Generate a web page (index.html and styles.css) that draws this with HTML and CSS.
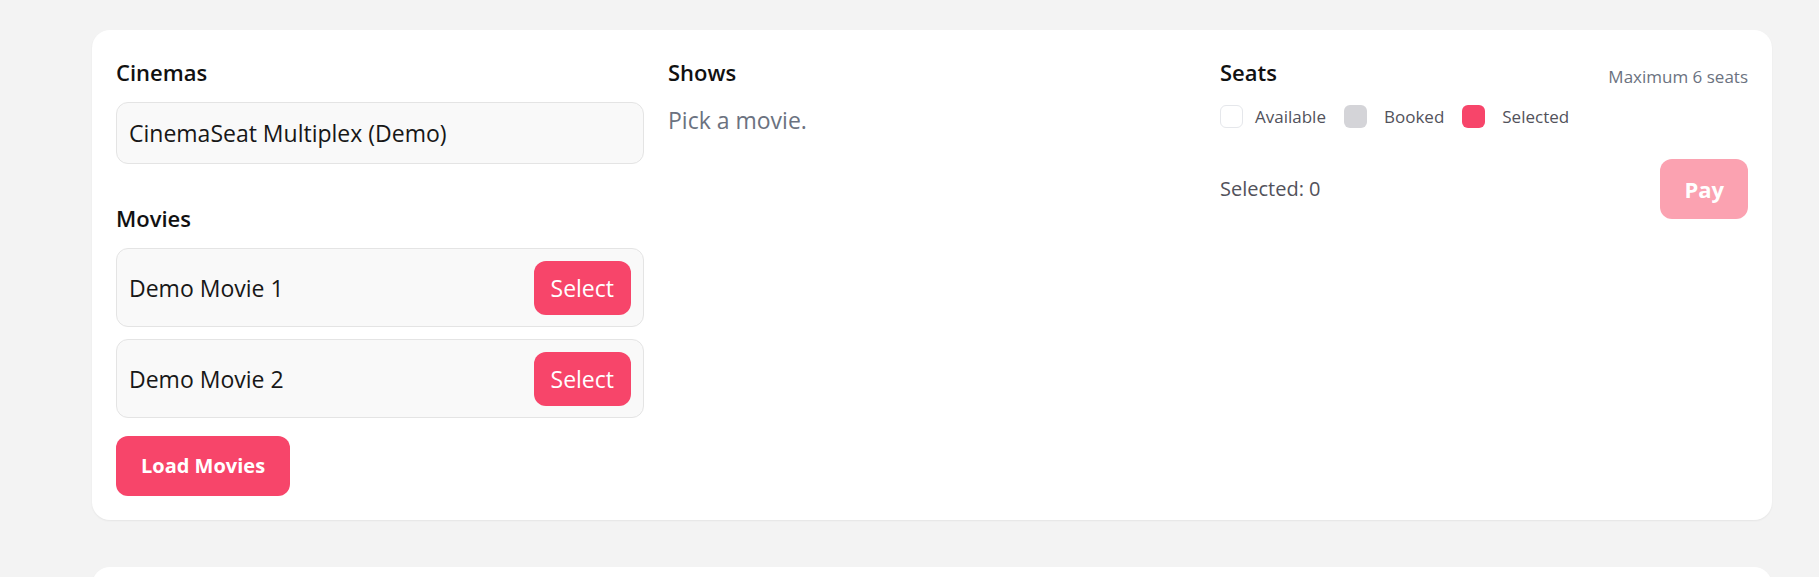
FILE: index.html
```html
<!DOCTYPE html>
<html lang="en">
<head>
<meta charset="utf-8">
<title>CinemaSeat</title>
<link rel="stylesheet" href="styles.css">
</head>
<body>
<main class="page">
  <section class="card booking">
    <div class="col">
      <div class="group">
        <h2 class="heading">Cinemas</h2>
        <div class="field">CinemaSeat Multiplex (Demo)</div>
      </div>
      <div class="group">
        <h2 class="heading">Movies</h2>
        <ul class="list">
          <li class="row"><span class="row-name">Demo Movie 1</span><button class="btn btn-sm">Select</button></li>
          <li class="row"><span class="row-name">Demo Movie 2</span><button class="btn btn-sm">Select</button></li>
        </ul>
        <button class="btn btn-lg load">Load Movies</button>
      </div>
    </div>
    <div class="col">
      <h2 class="heading">Shows</h2>
      <p class="muted">Pick a movie.</p>
    </div>
    <div class="col">
      <div class="seats-head">
        <h2 class="heading">Seats</h2>
        <span class="hint">Maximum 6 seats</span>
      </div>
      <div class="legend">
        <span class="swatch swatch-available"></span><span class="legend-label first">Available</span>
        <span class="swatch swatch-booked"></span><span class="legend-label">Booked</span>
        <span class="swatch swatch-selected"></span><span class="legend-label">Selected</span>
      </div>
      <div class="summary">
        <span class="count">Selected: 0</span>
        <button class="btn btn-lg pay" disabled>Pay</button>
      </div>
    </div>
  </section>
  <section class="card next"></section>
</main>
</body>
</html>
```

FILE: styles.css
```css
* { box-sizing: border-box; }

html, body {
  margin: 0;
  background: #f3f3f3;
  overflow: hidden;
}

body {
  font-family: "Open Sans", "Noto Sans", "Liberation Sans", sans-serif;
  color: #1a1a1a;
}

.page {
  padding: 30px 47px 0 92px;
}

.card {
  background: #ffffff;
  border-radius: 18px;
  box-shadow: 0 1px 2px rgba(0, 0, 0, 0.06);
}

.booking {
  display: grid;
  grid-template-columns: repeat(3, 1fr);
  column-gap: 24px;
  padding: 24px 24px 24px;
}

.next {
  margin-top: 47px;
  height: 60px;
}

.col {
  display: flex;
  flex-direction: column;
  min-width: 0;
}

.group + .group {
  margin-top: 36px;
}

.heading {
  margin: 0;
  font-size: 22px;
  font-weight: 600;
  line-height: 36px;
  color: #111111;
}

.field {
  margin-top: 12px;
  padding: 12px;
  border: 1px solid #e4e4e4;
  border-radius: 12px;
  background: #f9f9f9;
  font-size: 23px;
  line-height: 36px;
  color: #171717;
}

.list {
  list-style: none;
  margin: 12px 0 0;
  padding: 0;
  display: flex;
  flex-direction: column;
  gap: 12px;
}

.row {
  display: flex;
  align-items: center;
  justify-content: space-between;
  padding: 12px 12px 11px;
  border: 1px solid #e4e4e4;
  border-radius: 12px;
  background: #f9f9f9;
}

.row-name {
  font-size: 23px;
  line-height: 36px;
  color: #171717;
}

.btn {
  font-family: inherit;
  border: 0;
  color: #ffffff;
  background: #f7456a;
  cursor: pointer;
  border-radius: 12px;
}

.btn-sm {
  font-size: 23px;
  line-height: 36px;
  padding: 9px 17px;
  font-weight: 400;
}

.btn-lg {
  font-size: 22px;
  font-weight: 700;
  line-height: 36px;
  padding: 12px 24px;
}

.load {
  align-self: flex-start;
  margin-top: 18px;
  font-size: 20px;
  padding: 12px 25px;
}

.muted {
  margin: 12px 0 0;
  font-size: 23px;
  line-height: 36px;
  color: #6b7280;
}

.seats-head {
  display: flex;
  justify-content: space-between;
  align-items: flex-end;
}

.hint {
  font-size: 17px;
  line-height: 27px;
  color: #6b7280;
}

.legend {
  margin-top: 13px;
  height: 27px;
  display: flex;
  align-items: center;
}

.swatch {
  width: 23px;
  height: 23px;
  border-radius: 6px;
  flex: none;
}

.swatch-available {
  background: #ffffff;
  border: 1px solid #e5e7eb;
}

.swatch-booked {
  background: #d4d4d8;
}

.swatch-selected {
  background: #f7456a;
}

.legend-label {
  font-size: 17px;
  line-height: 27px;
  color: #52525b;
  margin-left: 17px;
  margin-right: 18px;
}

.legend-label.first {
  margin-left: 12px;
}

.summary {
  margin-top: 29px;
  display: flex;
  justify-content: space-between;
  align-items: center;
}

.count {
  font-size: 20px;
  line-height: 30px;
  color: #52525b;
}

.pay {
  background: #fba2b1;
  cursor: not-allowed;
}
```
